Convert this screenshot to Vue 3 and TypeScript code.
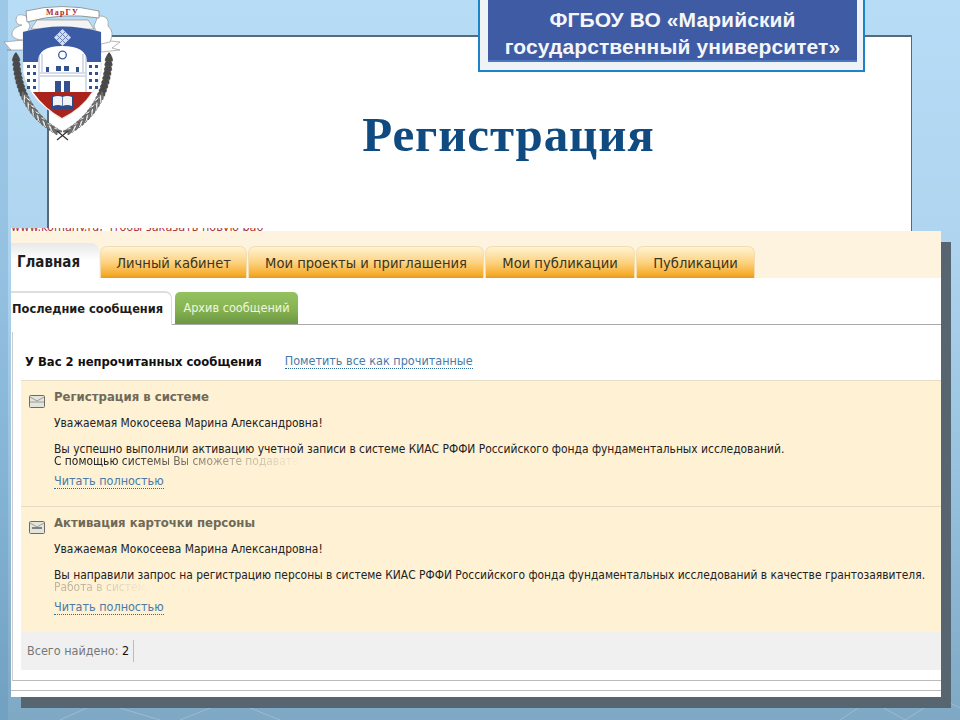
<template>
  <div class="slide">
    <div class="bg-strip"></div>
    <svg class="bg-pattern" width="960" height="30" viewBox="0 0 960 30" fill="none" stroke="#b5d0e2" stroke-opacity="0.5">
      <path d="M60 30 L100 12 L160 30 M180 30 L230 10 L280 30" />
      <path d="M840 30 L870 10 L905 30 M905 30 L940 8 L960 18" />
    </svg>

    <div class="sheet">
      <h1>Регистрация</h1>
    </div>

    <div class="banner">
      <div class="banner-inner">
        ФГБОУ ВО «Марийский<br />государственный университет»
      </div>
    </div>

    <svg class="logo" width="124" height="142" viewBox="0 0 124 142">
      <!-- ribbon ends -->
      <path d="M24 40 L4 42 L11 50 L7 50 L24 50 Z" fill="#fff" stroke="#888" stroke-width="0.6" />
      <path d="M101 40 L120 42 L112 48 L120 50 L101 52 Z" fill="#fff" stroke="#888" stroke-width="0.6" />
      <path d="M26 16 Q16 12 16 20 Q16 25 22 25 Q11 28 12 35 Q14 40 24 40 L30 26 Z" fill="#fff" stroke="#888" stroke-width="0.6" />
      <path d="M98 16 Q110 15 108 26 Q115 32 110 42 L101 44 L94 26 Z" fill="#fff" stroke="#888" stroke-width="0.6" />
      <path d="M37 20 H88 L94 29 H31 Z" fill="#f4f4f4" stroke="#888" stroke-width="0.6" />
      <path d="M26 11 Q62 2 99 11 L99 18 Q62 12 27 22 Z" fill="#fff" stroke="#777" stroke-width="0.7" />
      <text x="62.500" y="14.500" class="logo-text" text-anchor="middle">МарГУ</text>
      <!-- shield -->
      <path d="M23 32 Q62 21 101 32 L101 72 Q96 100 62 119 Q28 100 23 72 Z" fill="#fff" stroke="#ccc" stroke-width="0.5" />
      <path d="M23 32 Q62 21 101 32 L101 62 L87 62 Q87 46 62 46 Q38 46 38 62 L23 62 Z" fill="#3b5ba5" />
      <path d="M33 92 L92 92 Q82 108 62 118 Q44 108 33 92 Z" fill="#a9241c" />
      <rect x="56.500" y="31.500" width="12" height="12" transform="rotate(45 62.500 37.500)" fill="#d5dcec" />
      <path d="M57 35 L65 43 M60 32 L68 40 M68 35 L60 43 M65 32 L57 40" stroke="#5f7ab4" stroke-width="0.9" fill="none" />
      <circle cx="62.500" cy="55" r="3.800" fill="none" stroke="#3b5ba5" stroke-width="1.300" />
      <g fill="#33508f">
        <rect x="46" y="67" width="3" height="5" /><rect x="56" y="66" width="5" height="5" /><rect x="64" y="66" width="5" height="5" /><rect x="76" y="67" width="3" height="5" />
        <rect x="55" y="81" width="6" height="11" /><rect x="64" y="81" width="6" height="11" />
        <rect v-for="w in windows" :key="w.x + '-' + w.y" :x="w.x" :y="w.y" width="3" height="3" />
      </g>
      <path d="M40 73 H85 M40 76 H85 M39 56 V92 M86 56 V92 M42 54 V72 M83 54 V72" stroke="#8e9cc0" stroke-width="0.7" fill="none" />
      <rect x="51" y="95" width="23" height="14" fill="#2c4a8c" />
      <path d="M53 97 Q58 95 62.500 97 Q67 95 72 97 V106 Q67 104 62.500 106 Q58 104 53 106 Z" fill="#f2f2f2" />
      <path d="M62.500 97 V106" stroke="#2c4a8c" stroke-width="0.7" />
      <!-- wreath -->
      <g stroke="#444" stroke-width="0.5">
        <ellipse
          v-for="(leaf, i) in leaves"
          :key="i"
          cx="0"
          cy="0"
          rx="4.500"
          ry="1.200"
          :fill="leaf.fill"
          :transform="leaf.transform"
        />
      </g>
      <path d="M57 140 L68 131 M68 140 L57 131" stroke="#333" stroke-width="1.200" />
    </svg>

    <div class="shot">
      <div class="clipped-note"><span>www.komany.ru, чтобы заказать новую работу</span></div>
      <div class="tabs">
        <div class="tab active">Главная</div>
        <div v-for="t in tabs" :key="t.label" class="tab" :style="{ width: t.width + 'px' }">{{ t.label }}</div>
      </div>
      <div class="subtabs">
        <div class="subtab active">Последние сообщения</div>
        <div class="subtab green">Архив сообщений</div>
      </div>
      <div class="content">
        <div class="unread-row">
          <b>У Вас 2 непрочитанных сообщения</b>
          <a class="link">Пометить все как прочитанные</a>
        </div>
        <div v-for="(m, i) in messages" :key="m.title" class="message">
          <svg class="mail" width="16" height="13" viewBox="0 0 16 13">
            <rect x="0.500" y="0.500" width="15" height="12" rx="1" fill="#e4e4df" stroke="#6c6c66" />
            <path d="M1 2 L8 6 L15 2" fill="none" stroke="#8a8a82" stroke-width="0.8" />
            <path v-if="i === 1" d="M3 7 H13" stroke="#444" stroke-width="1.200" />
            <path v-else d="M1 7 H15" stroke="#8a8a82" stroke-width="0.8" />
          </svg>
          <div class="message-body">
            <div class="message-title">{{ m.title }}</div>
            <div class="greeting">Уважаемая Мокосеева Марина Александровна!</div>
            <div class="line">{{ m.text }}</div>
            <div class="fade" :class="m.fadeClass">{{ m.tail }}</div>
            <a class="link read">Читать полностью</a>
          </div>
        </div>
        <div class="total">
          <span>Всего найдено: <b>2</b></span>
        </div>
      </div>
      <div class="foot"></div>
    </div>
  </div>
</template>

<script setup lang="ts">
interface Tab {
  label: string
  width: number
}

interface Message {
  title: string
  text: string
  tail: string
  fadeClass: string
}

const tabs: Tab[] = [
  { label: 'Личный кабинет', width: 147 },
  { label: 'Мои проекты и приглашения', width: 236 },
  { label: 'Мои публикации', width: 150 },
  { label: 'Публикации', width: 119 },
]

const messages: Message[] = [
  {
    title: 'Регистрация в системе',
    text: 'Вы успешно выполнили активацию учетной записи в системе КИАС РФФИ Российского фонда фундаментальных исследований.',
    tail: 'С помощью системы Вы сможете подавать',
    fadeClass: 'fade-long',
  },
  {
    title: 'Активация карточки персоны',
    text: 'Вы направили запрос на регистрацию персоны в системе КИАС РФФИ Российского фонда фундаментальных исследований в качестве грантозаявителя.',
    tail: 'Работа в систем',
    fadeClass: 'fade-short',
  },
]

const windows: { x: number; y: number }[] = []
for (const x of [27, 33, 89, 95]) {
  for (const y of [65, 72, 79, 86]) {
    windows.push({ x, y })
  }
}

// laurel branches: leaves set along a curve, mirrored around the shield axis
const leaves: { fill: string; transform: string }[] = []
for (let n = 0; n < 22; n++) {
  const t = n / 21
  const x = (1 - t) ** 2 * 16 + 2 * (1 - t) * t * 18 + t * t * 56
  const y = (1 - t) ** 2 * 57 + 2 * (1 - t) * t * 108 + t * t * 131
  const angle = (Math.atan2(2 * (1 - t) * (108 - 57) + 2 * t * (131 - 108), 2 * (1 - t) * 2 + 2 * t * 38) * 180) / Math.PI
  const fill = n < 9 ? '#4a4a4a' : n % 2 ? '#777' : '#f0f0f0'
  for (const side of [-25, 25]) {
    const off = side < 0 ? 1.5 : -1.5
    leaves.push({ fill, transform: `translate(${(x + off).toFixed(1)} ${y.toFixed(1)}) rotate(${(angle + side).toFixed(0)})` })
    leaves.push({ fill, transform: `translate(${(125 - x - off).toFixed(1)} ${y.toFixed(1)}) rotate(${(180 - angle - side).toFixed(0)})` })
  }
}
</script>

<style>
html,
body {
  margin: 0;
  overflow: hidden;
}
</style>

<style scoped>
.slide {
  position: relative;
  width: 960px;
  height: 720px;
  overflow: hidden;
  background: linear-gradient(180deg, #b7dcf6 0%, #aed4ef 35%, #94bfdc 70%, #7ea8c4 100%);
  font-family: "DejaVu Sans Condensed", "DejaVu Sans", sans-serif;
}

.bg-strip {
  position: absolute;
  left: 0;
  top: 0;
  bottom: 0;
  width: 8px;
  background: rgba(70, 130, 180, 0.22);
}

.bg-pattern {
  position: absolute;
  left: 0;
  bottom: 0;
}

.sheet {
  position: absolute;
  left: 47px;
  top: 35px;
  width: 865px;
  height: 300px;
  background: #fff;
  border-top: 2px solid #586a78;
  border-left: 2px solid #586a78;
  border-right: 1px solid #586a78;
  box-sizing: border-box;
}

.sheet h1 {
  margin: 0;
  padding-top: 70px;
  padding-left: 57px;
  text-align: center;
  font: bold 49px/56px "Liberation Serif", serif;
  color: #0f4a80;
  letter-spacing: 0.900px;
}

.banner {
  position: absolute;
  left: 478px;
  top: -3px;
  width: 387px;
  height: 75px;
  box-sizing: border-box;
  border: 2px solid #1b84c8;
  background: #f0f3f5;
  padding-left: 8px;
}

.banner-inner {
  width: 369px;
  height: 63px;
  padding-top: 7px;
  box-sizing: border-box;
  background: #3f5ba3;
  border-bottom: 2px solid #4a78c0;
  color: #f4f6fa;
  font: bold 21px/27px "Liberation Sans", sans-serif;
  letter-spacing: 0.1px;
  text-align: center;
}

.logo {
  position: absolute;
  left: 0;
  top: 0;
}

.logo-text {
  font: bold 8px "Liberation Serif", serif;
  fill: #b21f2c;
  letter-spacing: 1.200px;
}

.shot {
  position: absolute;
  left: 11px;
  top: 231px;
  width: 930px;
  height: 466px;
  background: #fff;
  box-shadow: 10px 11px 0 #566570;
  font-size: 12px;
  color: #222;
}

.clipped-note {
  position: absolute;
  left: 0;
  top: -3px;
  height: 3px;
  width: 252px;
  overflow: hidden;
  background: #fff;
  color: #a33;
  font-size: 12.500px;
  white-space: nowrap;
}

.clipped-note span {
  display: block;
  line-height: 4px;
  margin-top: -3px;
}

.tabs {
  display: flex;
  align-items: flex-end;
  gap: 1px;
  height: 47px;
  background: #fdf3df;
}

.tab {
  box-sizing: border-box;
  height: 32px;
  border: 1px solid #f3ddb0;
  border-bottom: 0;
  border-radius: 7px 7px 0 0;
  background: linear-gradient(180deg, #fff3d4 0%, #fdd27f 50%, #f6ab2a 90%, #e39b22 100%);
  color: #3a3420;
  font-size: 14.600px;
  line-height: 31px;
  text-align: center;
  white-space: nowrap;
}

.tab.active {
  width: 88px;
  height: 35px;
  border: 0;
  border-radius: 0 8px 0 0;
  background: linear-gradient(180deg, #e8e8e8 0%, #fff 50%);
  color: #1e1e1e;
  font-size: 15px;
  font-weight: bold;
  line-height: 38px;
  padding-right: 13px;
}

.subtabs {
  display: flex;
  align-items: flex-end;
  gap: 3px;
  height: 47px;
  border-bottom: 1px solid #aaa;
  box-sizing: border-box;
}

.subtab {
  box-sizing: border-box;
  text-align: center;
  white-space: nowrap;
}

.subtab.active {
  width: 161px;
  height: 34px;
  margin-bottom: -1px;
  padding-left: 1px;
  border-top: 2px solid #ddd;
  border-right: 1px solid #ddd;
  border-radius: 0 7px 0 0;
  background: #fff;
  font-weight: bold;
  font-size: 12.700px;
  line-height: 32px;
  text-align: left;
  color: #1c1c1c;
}

.subtab.green {
  width: 123px;
  height: 32px;
  border-radius: 5px 5px 0 0;
  background: linear-gradient(180deg, #95c260 0%, #86b351 55%, #6c9644 100%);
  color: #eef5e0;
  font-size: 12.600px;
  line-height: 31px;
}

.content {
  height: 348px;
  margin: 7px 0 0 1px;
  padding-left: 8px;
  border-left: 1px solid #ccc;
  border-bottom: 1px solid #bbb;
}

.unread-row {
  display: flex;
  align-items: center;
  gap: 23px;
  height: 48px;
  padding: 10px 0 0 4px;
  box-sizing: border-box;
  font-size: 12.900px;
  color: #111;
}

.link {
  color: #4a7aa8;
  border-bottom: 1px dotted #2f6aa0;
  font-size: 12.500px;
  line-height: 15px;
}

.message {
  display: flex;
  height: 126px;
  box-sizing: border-box;
  border-top: 1px solid #e7dcc6;
  background: #fef1d4;
}

.mail {
  margin: 14px 0 0 8px;
  flex: none;
}

.message-body {
  padding: 9px 0 0 9px;
  font-size: 11.900px;
  line-height: 12px;
  white-space: nowrap;
}

.message-title {
  font-size: 13px;
  font-weight: bold;
  line-height: 14px;
  color: #6f6a58;
}

.greeting {
  margin-top: 13px;
  margin-bottom: 14px;
}

.fade {
  width: 280px;
  overflow: hidden;
  -webkit-mask-image: linear-gradient(90deg, #000 20%, transparent 88%);
  mask-image: linear-gradient(90deg, #000 20%, transparent 88%);
}

.fade-short {
  width: 100px;
  color: #8a8272;
  -webkit-mask-image: linear-gradient(90deg, #0008 30%, transparent 95%);
  mask-image: linear-gradient(90deg, #0008 30%, transparent 95%);
}

.read {
  display: inline-block;
  margin-top: 6px;
}

.total {
  display: flex;
  align-items: center;
  height: 38px;
  padding-left: 6px;
  background: #f0f0f0;
  color: #777;
  font-size: 12.500px;
}

.total span {
  line-height: 22px;
  padding-right: 4px;
  border-right: 1px solid #bbb;
}

.total b {
  font-weight: normal;
  color: #111;
}

.foot {
  height: 9px;
  border-bottom: 1px solid #bbb;
}
</style>
